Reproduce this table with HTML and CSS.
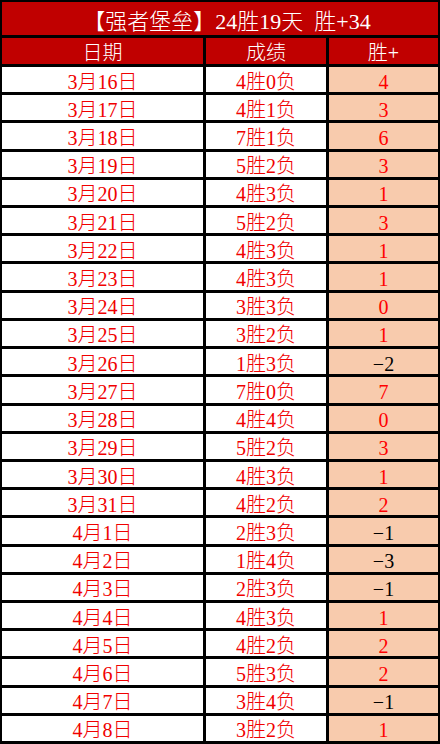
FILE: index.html
```html
<!DOCTYPE html>
<html lang="zh-CN">
<head>
<meta charset="utf-8">
<title>强者堡垒</title>
<link rel="stylesheet" href="styles.css">
</head>
<body>
<div class="sheet">
  <div class="title">【强者堡垒】24胜19天&nbsp;&nbsp;胜+34</div>
  <div class="head">日期</div><div class="head">成绩</div><div class="head">胜+</div>

  <div class="date">3月16日</div><div class="score">4胜0负</div><div class="val">4</div>
  <div class="date">3月17日</div><div class="score">4胜1负</div><div class="val">3</div>
  <div class="date">3月18日</div><div class="score">7胜1负</div><div class="val">6</div>
  <div class="date">3月19日</div><div class="score">5胜2负</div><div class="val">3</div>
  <div class="date">3月20日</div><div class="score">4胜3负</div><div class="val">1</div>
  <div class="date">3月21日</div><div class="score">5胜2负</div><div class="val">3</div>
  <div class="date">3月22日</div><div class="score">4胜3负</div><div class="val">1</div>
  <div class="date">3月23日</div><div class="score">4胜3负</div><div class="val">1</div>
  <div class="date">3月24日</div><div class="score">3胜3负</div><div class="val">0</div>
  <div class="date">3月25日</div><div class="score">3胜2负</div><div class="val">1</div>
  <div class="date">3月26日</div><div class="score">1胜3负</div><div class="val neg">−2</div>
  <div class="date">3月27日</div><div class="score">7胜0负</div><div class="val">7</div>
  <div class="date">3月28日</div><div class="score">4胜4负</div><div class="val">0</div>
  <div class="date">3月29日</div><div class="score">5胜2负</div><div class="val">3</div>
  <div class="date">3月30日</div><div class="score">4胜3负</div><div class="val">1</div>
  <div class="date">3月31日</div><div class="score">4胜2负</div><div class="val">2</div>
  <div class="date">4月1日</div><div class="score">2胜3负</div><div class="val neg">−1</div>
  <div class="date">4月2日</div><div class="score">1胜4负</div><div class="val neg">−3</div>
  <div class="date">4月3日</div><div class="score">2胜3负</div><div class="val neg">−1</div>
  <div class="date">4月4日</div><div class="score">4胜3负</div><div class="val">1</div>
  <div class="date">4月5日</div><div class="score">4胜2负</div><div class="val">2</div>
  <div class="date">4月6日</div><div class="score">5胜3负</div><div class="val">2</div>
  <div class="date">4月7日</div><div class="score">3胜4负</div><div class="val neg">−1</div>
  <div class="date">4月8日</div><div class="score">3胜2负</div><div class="val">1</div>
</div>
</body>
</html>
```
FILE: styles.css
```css
html, body {
  margin: 0;
  padding: 0;
  background: #ffffff;
}

.sheet {
  box-sizing: border-box;
  width: 440px;
  height: 744px;
  padding: 2px 2px 3px 2px;
  background: #000000;
  display: grid;
  grid-template-columns: 201px 120px 109px;
  grid-template-rows: 33px 26px repeat(24, 1fr);
  gap: 3px;
  font-family: "Liberation Serif", "Noto Sans CJK SC", serif;
  font-weight: 300;
  font-size: 20px;
}

.sheet > div {
  display: flex;
  align-items: center;
  justify-content: center;
  line-height: 1;
  padding-top: 4px;
  white-space: nowrap;
}

.sheet > .title {
  grid-column: 1 / -1;
  background: #c00000;
  color: #ffffff;
  font-size: 22px;
  padding-top: 6px;
  padding-left: 14px;
}

.sheet > .head {
  background: #c00000;
  color: #ffffff;
  padding-top: 3px;
}

.date, .score {
  background: #ffffff;
  color: #f00000;
}

.val {
  background: #f8cbad;
  color: #ff0000;
}

.val.neg {
  color: #000000;
}
```
